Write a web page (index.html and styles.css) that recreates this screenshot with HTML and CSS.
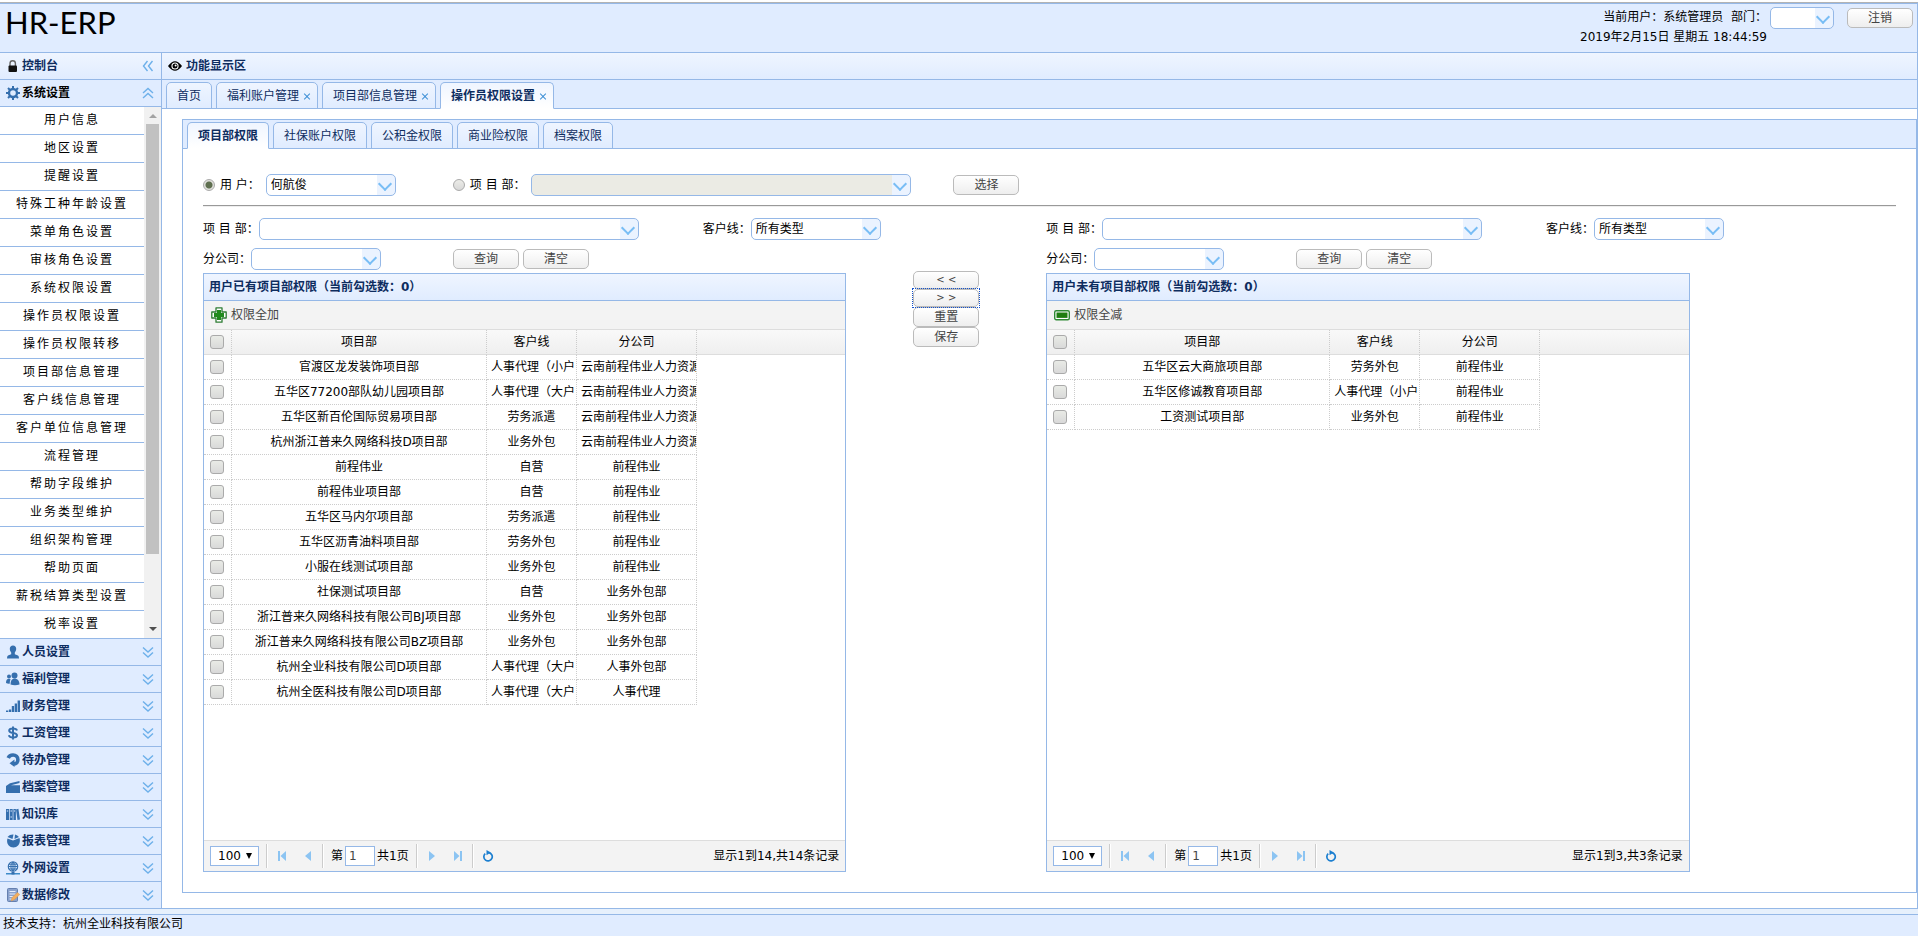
FILE: index.html
```html
<!DOCTYPE html>
<html lang="zh-CN">
<head>
    <meta charset="UTF-8">
    <meta name="viewport" content="width=device-width, initial-scale=1.0">
    <title>HR-ERP</title>
    <link rel="stylesheet" href="styles.css">
</head>
<body>
    <svg class="sprite" aria-hidden="true">
        <symbol id="i-lock" viewBox="0 0 14 14"><path d="M4 7V4.500a2.700 2.700 0 0 1 5.400 0V7" fill="none" stroke="#666" stroke-width="1.400"/><rect x="2.500" y="6.500" width="8.500" height="6.500" rx="1" fill="#111"/></symbol>
        <symbol id="i-eye" viewBox="0 0 14 14"><path d="M0 7q7-9.500 14 0-7 9.500-14 0z" fill="#000"/><circle cx="7" cy="7" r="3.600" fill="#fff"/><circle cx="7" cy="7" r="2.500" fill="#000"/><circle cx="7.600" cy="6.400" r="1" fill="#fff"/></symbol>
        <symbol id="i-gear" viewBox="0 0 14 14"><circle cx="7" cy="7" r="4" fill="none" stroke="#356fae" stroke-width="2.400"/><path d="M7 0v3M7 11v3M0 7h3M11 7h3M2 2l2 2M10 10l2 2M12 2l-2 2M4 10l-2 2" stroke="#356fae" stroke-width="2"/></symbol>
        <symbol id="i-user" viewBox="0 0 14 14"><path d="M7 .5c2 0 3.200 1.300 3.200 3.200 0 1.800-.8 2.800-1.400 3.800v1.700l3.200 1.300q1 .5 1 3H1q0-2.500 1-3l3.200-1.300V7.500C4.600 6.500 3.800 5.500 3.800 3.700 3.800 1.800 5 .5 7 .5z"/></symbol>
        <symbol id="i-users" viewBox="0 0 14 14"><circle cx="8.500" cy="3.500" r="3"/><path d="M4.500 12.500c0-4 1.500-6 4-6s5 2 5 6q-4.500 1.500-9 0z"/><circle cx="3" cy="4.500" r="2"/><path d="M0 11c0-3 1-4.200 3-4.200q1 0 1.600.5Q3.700 9 3.700 11.800 1.500 12 0 11z"/></symbol>
        <symbol id="i-bars" viewBox="0 0 14 14"><path d="M0 11.500h2.300V13H0zM2.900 10.500h2.300V13H2.900zM5.800 7h2.300v6H5.800zM8.700 4.500H11V13H8.700zM11.600 1.500H14V13h-2.400z"/></symbol>
        <symbol id="i-dollar" viewBox="0 0 14 14"><path d="M11 4.500C10.500 3 9 2.500 7 2.500c-2.500 0-3.800 1-3.800 2.300C3.200 8 11 6 11 9.300c0 1.400-1.600 2.300-4 2.300-2.200 0-3.700-.8-4.200-2.300M7 .5v13" fill="none" stroke="#356fae" stroke-width="2"/></symbol>
        <symbol id="i-turn" viewBox="0 0 14 14"><path d="M2.200 5C3 3 4.800 2 7 2c3 0 4.900 2 4.900 4.700 0 2.600-2 4.300-4.400 4.300" fill="none" stroke="#356fae" stroke-width="3.600"/><path d="M8.500 6.500V14L3.500 10.300z"/></symbol>
        <symbol id="i-folder" viewBox="0 0 14 14"><path d="M0 6l4-2.800L13.500 1v2L5 5.200h9V13H0z"/></symbol>
        <symbol id="i-books" viewBox="0 0 14 14"><path d="M0 2h3v11H0zM3.700 2h3v11h-3zM7.400 2h2.500v11H7.400zM10 2.500l2.400-.8L14 12.500l-2.500.5z"/><path d="M.8 4h1.400M4.500 4h1.400M8 4h1.200M4.500 10h1.400" stroke="#e0ecff"/></symbol>
        <symbol id="i-pie" viewBox="0 0 14 14"><path d="M7 6.500l6.500-2.500c1.500 5-1.500 9.500-6 9.500-5 0-7.500-4.500-6-9z"/><path d="M6.500 5L1.500 3C3 .8 6 .2 7.500.5zM8.500 5l.5-4.500q2.500.5 4 2.500z"/></symbol>
        <symbol id="i-globe" viewBox="0 0 14 14"><circle cx="7" cy="5.500" r="4.700" fill="#dcecff" stroke="#356fae" stroke-width="1.200"/><path d="M2.500 5.500h9M3 3.200h8M3 8h8M7 1v9.500M7 1Q2.500 5.500 7 10M7 1q4.500 4.500 0 9" fill="none" stroke="#356fae"/><path d="M0 12h14v1.500H0z" fill="#3d8bc9"/><path d="M5.500 11h3v2.500h-3z"/></symbol>
        <symbol id="i-note" viewBox="0 0 14 14"><rect x="1.500" y=".5" width="10" height="13" rx="1" fill="#8aa2cd" stroke="#6580b0"/><path d="M3.500 3.500h6M3.500 6h6M3.500 8.500h4M3.500 11h3" stroke="#e7eefb"/><path d="M5 13l1-3.500 5.500-5 2.300 2-5.600 5.300z" fill="#f3ae5f" stroke="#d59a58" stroke-width=".5"/></symbol>
        <symbol id="i-left2" viewBox="0 0 12 12"><path d="M5.500 1L1.500 6l4 5M10.500 1l-4 5 4 5" fill="none" stroke="#6db0ea" stroke-width="1.400"/></symbol>
        <symbol id="i-up2" viewBox="0 0 12 12"><path d="M1 6l5-4.500L11 6M1 11l5-4.500 5 4.500" fill="none" stroke="#6db0ea" stroke-width="1.400"/></symbol>
        <symbol id="i-down2" viewBox="0 0 12 12"><path d="M1 1.500L6 6l5-4.500M1 6.500L6 11l5-4.500" fill="none" stroke="#6db0ea" stroke-width="1.400"/></symbol>
        <symbol id="i-plus" viewBox="0 0 16 16"><path d="M5 .8h6L11 5h4.200v6H11v4.200H5V11H.8V5H5z" fill="#fff" stroke="#2f7d35" stroke-width="1.300" stroke-linejoin="round"/><path d="M6 3h4v3h3v4h-3v3H6v-3H3V6h3z" fill="#218a1e"/></symbol>
        <symbol id="i-minus" viewBox="0 0 16 16"><rect x=".7" y="3.700" width="14.600" height="9" rx="1.500" fill="#fff" stroke="#2f8a35" stroke-width="1.400"/><path d="M2.500 5.500h11v5.400h-11z" fill="#1e7d10"/></symbol>
        <symbol id="i-first" viewBox="0 0 12 12"><path d="M2 1h2v10H2zM10 1v10L4.500 6z"/></symbol>
        <symbol id="i-prev" viewBox="0 0 12 12"><path d="M9 1v10L3 6z"/></symbol>
        <symbol id="i-next" viewBox="0 0 12 12"><path d="M3 1v10l6-5z"/></symbol>
        <symbol id="i-last" viewBox="0 0 12 12"><path d="M8 1h2v10H8zM2 1v10l5.500-5z"/></symbol>
        <symbol id="i-refresh" viewBox="0 0 12 12"><path d="M3.200 3.600A4.200 4.200 0 1 0 7 2.600" fill="none" stroke="#1c7fd0" stroke-width="1.700"/><path d="M4.500 0v5.200L8.800 2.600z" fill="#1c7fd0"/></symbol>
    </svg>

    <header class="north">
        <h1>HR-ERP</h1>
        <div class="user-bar">
            <div class="user-info">
                <label for="dept">当前用户：系统管理员&nbsp; 部门：</label>
                <div>2019年2月15日 星期五 18:44:59</div>
            </div>
            <span class="combo combo-xs"><select id="dept"><option></option></select></span>
            <button class="btn logout">注销</button>
        </div>
    </header>

    <div class="middle">
        <nav class="west">
            <div class="panel-title"><svg class="icon"><use href="#i-lock"/></svg>控制台<svg class="tool"><use href="#i-left2"/></svg></div>
            <div class="acc-title selected"><svg class="icon"><use href="#i-gear"/></svg>系统设置<svg class="tool"><use href="#i-up2"/></svg></div>
            <div class="menu-wrap">
                <ul class="menu">
                    <li><a href="#">用户信息</a></li>
                    <li><a href="#">地区设置</a></li>
                    <li><a href="#">提醒设置</a></li>
                    <li><a href="#">特殊工种年龄设置</a></li>
                    <li><a href="#">菜单角色设置</a></li>
                    <li><a href="#">审核角色设置</a></li>
                    <li><a href="#">系统权限设置</a></li>
                    <li><a href="#">操作员权限设置</a></li>
                    <li><a href="#">操作员权限转移</a></li>
                    <li><a href="#">项目部信息管理</a></li>
                    <li><a href="#">客户线信息管理</a></li>
                    <li><a href="#">客户单位信息管理</a></li>
                    <li><a href="#">流程管理</a></li>
                    <li><a href="#">帮助字段维护</a></li>
                    <li><a href="#">业务类型维护</a></li>
                    <li><a href="#">组织架构管理</a></li>
                    <li><a href="#">帮助页面</a></li>
                    <li><a href="#">薪税结算类型设置</a></li>
                    <li><a href="#">税率设置</a></li>
                </ul>
                <div class="scrollbar"><i class="up"></i><i class="thumb"></i><i class="down"></i></div>
            </div>
            <div class="acc-title"><svg class="icon"><use href="#i-user"/></svg>人员设置<svg class="tool"><use href="#i-down2"/></svg></div>
            <div class="acc-title"><svg class="icon"><use href="#i-users"/></svg>福利管理<svg class="tool"><use href="#i-down2"/></svg></div>
            <div class="acc-title"><svg class="icon"><use href="#i-bars"/></svg>财务管理<svg class="tool"><use href="#i-down2"/></svg></div>
            <div class="acc-title"><svg class="icon"><use href="#i-dollar"/></svg>工资管理<svg class="tool"><use href="#i-down2"/></svg></div>
            <div class="acc-title"><svg class="icon"><use href="#i-turn"/></svg>待办管理<svg class="tool"><use href="#i-down2"/></svg></div>
            <div class="acc-title"><svg class="icon"><use href="#i-folder"/></svg>档案管理<svg class="tool"><use href="#i-down2"/></svg></div>
            <div class="acc-title"><svg class="icon"><use href="#i-books"/></svg>知识库<svg class="tool"><use href="#i-down2"/></svg></div>
            <div class="acc-title"><svg class="icon"><use href="#i-pie"/></svg>报表管理<svg class="tool"><use href="#i-down2"/></svg></div>
            <div class="acc-title"><svg class="icon"><use href="#i-globe"/></svg>外网设置<svg class="tool"><use href="#i-down2"/></svg></div>
            <div class="acc-title"><svg class="icon"><use href="#i-note"/></svg>数据修改<svg class="tool"><use href="#i-down2"/></svg></div>
        </nav>

        <main class="center">
            <div class="panel-title"><svg class="icon"><use href="#i-eye"/></svg>功能显示区</div>
            <ul class="tabs">
                <li><a href="#">首页</a></li>
                <li class="closable"><a href="#">福利账户管理</a><button class="close" aria-label="关闭"></button></li>
                <li class="closable"><a href="#">项目部信息管理</a><button class="close" aria-label="关闭"></button></li>
                <li class="closable selected"><a href="#">操作员权限设置</a><button class="close" aria-label="关闭"></button></li>
            </ul>
            <section class="work">
                <ul class="tabs">
                    <li class="selected"><a href="#">项目部权限</a></li>
                    <li><a href="#">社保账户权限</a></li>
                    <li><a href="#">公积金权限</a></li>
                    <li><a href="#">商业险权限</a></li>
                    <li><a href="#">档案权限</a></li>
                </ul>
                <div class="work-body">
                    <div class="row target">
                        <input type="radio" name="target" id="byUser" checked>
                        <label for="byUser">用 户：</label>
                        <span class="combo"><select aria-label="用户"><option>何航俊</option></select></span>
                        <input type="radio" name="target" id="byDept" class="second">
                        <label for="byDept">项 目 部：</label>
                        <span class="combo combo-lg"><select class="readonly" aria-label="项目部"><option></option></select></span>
                        <button class="btn choose">选择</button>
                    </div>
                    <hr>
                    <div class="filters">
                        <form class="filter">
                            <div class="row">
                                <label for="dept1">项 目 部：</label>
                                <span class="combo combo-lg"><select id="dept1"><option></option></select></span>
                                <label for="line1" class="line">客户线：</label>
                                <span class="combo"><select id="line1"><option>所有类型</option></select></span>
                            </div>
                            <div class="row">
                                <label for="branch1">分公司：</label>
                                <span class="combo"><select id="branch1"><option></option></select></span>
                                <button type="button" class="btn query">查询</button>
                                <button type="button" class="btn clear">清空</button>
                            </div>
                        </form>
                        <form class="filter">
                            <div class="row">
                                <label for="dept2">项 目 部：</label>
                                <span class="combo combo-lg"><select id="dept2"><option></option></select></span>
                                <label for="line2" class="line">客户线：</label>
                                <span class="combo"><select id="line2"><option>所有类型</option></select></span>
                            </div>
                            <div class="row">
                                <label for="branch2">分公司：</label>
                                <span class="combo"><select id="branch2"><option></option></select></span>
                                <button type="button" class="btn query">查询</button>
                                <button type="button" class="btn clear">清空</button>
                            </div>
                        </form>
                    </div>
                    <div class="transfer">
                        <div class="datagrid" id="owned"></div>
                        <div class="moves">
                            <button class="btn small">&lt; &lt;</button>
                            <button class="btn small focus">&gt; &gt;</button>
                            <button class="btn">重置</button>
                            <button class="btn">保存</button>
                        </div>
                        <div class="datagrid" id="missing"></div>
                    </div>
                </div>
            </section>
        </main>
    </div>

    <footer class="south">技术支持：杭州全业科技有限公司</footer>

    <script>
        const owned = [
            ['官渡区龙发装饰项目部', '人事代理（小户', '云南前程伟业人力资源'],
            ['五华区77200部队幼儿园项目部', '人事代理（大户', '云南前程伟业人力资源'],
            ['五华区新百伦国际贸易项目部', '劳务派遣', '云南前程伟业人力资源'],
            ['杭州浙江普来久网络科技D项目部', '业务外包', '云南前程伟业人力资源'],
            ['前程伟业', '自营', '前程伟业'],
            ['前程伟业项目部', '自营', '前程伟业'],
            ['五华区马内尔项目部', '劳务派遣', '前程伟业'],
            ['五华区沥青油料项目部', '劳务外包', '前程伟业'],
            ['小服在线测试项目部', '业务外包', '前程伟业'],
            ['社保测试项目部', '自营', '业务外包部'],
            ['浙江普来久网络科技有限公司BJ项目部', '业务外包', '业务外包部'],
            ['浙江普来久网络科技有限公司BZ项目部', '业务外包', '业务外包部'],
            ['杭州全业科技有限公司D项目部', '人事代理（大户', '人事外包部'],
            ['杭州全医科技有限公司D项目部', '人事代理（大户', '人事代理']
        ];
        const missing = [
            ['五华区云大商旅项目部', '劳务外包', '前程伟业'],
            ['五华区修诚教育项目部', '人事代理（小户', '前程伟业'],
            ['工资测试项目部', '业务外包', '前程伟业']
        ];

        function renderGrid(id, title, icon, action, rows) {
            const body = rows.map(row => `
                <tr>
                    <td><input type="checkbox" aria-label="${row[0]}"></td>
                    <td>${row[0]}</td><td>${row[1]}</td><td>${row[2]}</td>
                </tr>`).join('');
            document.getElementById(id).innerHTML = `
                <div class="panel-title">${title}（当前勾选数：0）</div>
                <div class="toolbar"><button><svg><use href="#${icon}"/></svg>${action}</button></div>
                <div class="grid-view">
                    <table>
                        <colgroup><col class="c-check"><col class="c-dept"><col class="c-line"><col class="c-branch"><col></colgroup>
                        <thead><tr>
                            <th><input type="checkbox" aria-label="全选"></th>
                            <th>项目部</th><th>客户线</th><th>分公司</th><th class="rest"></th>
                        </tr></thead>
                        <tbody>${body}</tbody>
                    </table>
                </div>
                <div class="pager">
                    <span class="page-size"><select aria-label="每页条数"><option>100</option></select></span>
                    <span class="sep"></span>
                    <button aria-label="首页"><svg><use href="#i-first"/></svg></button>
                    <button aria-label="上一页"><svg><use href="#i-prev"/></svg></button>
                    <span class="sep"></span>
                    <label class="page-num">第<input type="text" value="1">共1页</label>
                    <span class="sep"></span>
                    <button aria-label="下一页"><svg><use href="#i-next"/></svg></button>
                    <button aria-label="末页"><svg><use href="#i-last"/></svg></button>
                    <span class="sep"></span>
                    <button aria-label="刷新"><svg><use href="#i-refresh"/></svg></button>
                    <span class="page-info">显示1到${rows.length},共${rows.length}条记录</span>
                </div>`;
        }

        renderGrid('owned', '用户已有项目部权限', 'i-plus', '权限全加', owned);
        renderGrid('missing', '用户未有项目部权限', 'i-minus', '权限全减', missing);
    </script>
</body>
</html>
```
FILE: styles.css
```css
* {
    box-sizing: border-box;
}
body {
    display: flex;
    flex-direction: column;
    height: 100vh;
    margin: 0;
    padding-top: 2px;
    background: #fff;
    color: #000;
    font: 12px/18px "DejaVu Sans", "Noto Sans CJK SC", sans-serif;
}
ul {
    list-style: none;
    margin: 0;
    padding: 0;
}
a {
    color: inherit;
    text-decoration: none;
}
button, input, select {
    margin: 0;
    font: inherit;
    color: inherit;
}
svg {
    display: block;
}
.sprite {
    position: absolute;
    width: 0;
    height: 0;
}

/* page frame */
.north {
    display: flex;
    justify-content: space-between;
    height: 51px;
    border-top: 1px solid #b3b3b3;
    border-right: 1px solid #95b8e7;
    border-bottom: 1px solid #95b8e7;
    background: #e0ecff;
    box-shadow: inset 0 1px #95b8e7;
}
.north h1 {
    margin: 0;
    padding: 1px 0 0 5px;
    font: 31px/36px Lato, "Open Sans", sans-serif;
}
.user-bar {
    display: flex;
    align-items: flex-start;
    padding: 4px 4px 0 0;
}
.user-info {
    margin-right: 3px;
    text-align: right;
    line-height: 20px;
}
.logout {
    margin: 1px 0 0 13px;
}
.middle {
    display: flex;
    flex: 1;
    min-height: 0;
    border-bottom: 1px solid #95b8e7;
}
.south {
    height: 22px;
    margin-top: 5px;
    padding-left: 3px;
    border-top: 1px solid #95b8e7;
    background: #e0ecff;
    box-shadow: 0 -5px #e6f0fc;
}
.panel-title {
    display: flex;
    align-items: center;
    flex: none;
    height: 27px;
    padding: 0 7px 0 6px;
    border-bottom: 1px solid #95b8e7;
    background: linear-gradient(#eff5ff, #e0ecff);
    color: #0e2d5f;
    font-weight: bold;
}
.icon {
    width: 14px;
    height: 14px;
    margin-right: 2px;
    fill: #356fae;
}
.tool {
    width: 12px;
    height: 12px;
    margin-left: auto;
}

/* left menu */
.west {
    display: flex;
    flex-direction: column;
    flex: none;
    width: 162px;
    border-right: 1px solid #95b8e7;
}
.acc-title {
    display: flex;
    align-items: center;
    flex: none;
    height: 27px;
    padding: 0 7px 0 6px;
    border-top: 1px solid #95b8e7;
    background: #e0ecff;
    color: #0e2d5f;
    font-weight: bold;
}
.acc-title.selected {
    border-top: 0;
    border-bottom: 1px solid #95b8e7;
    color: #000;
}
.menu-wrap {
    display: flex;
    flex: 1;
    min-height: 0;
}
.menu {
    flex: 1;
    overflow: hidden;
}
.menu a {
    display: block;
    height: 28px;
    border-bottom: 1px solid #95b8e7;
    line-height: 26px;
    letter-spacing: 2px;
    text-align: center;
}
.menu li:last-child a {
    border-bottom: 0;
}
.scrollbar {
    display: flex;
    flex-direction: column;
    align-items: center;
    width: 17px;
    background: #f1f1f1;
}
.scrollbar .up, .scrollbar .down {
    margin: 7px 0 6px;
    border: 4px solid transparent;
    border-top-width: 0;
    border-bottom-color: #a3a3a3;
}
.scrollbar .down {
    margin: auto 0 7px;
    border-width: 4px 4px 0;
    border-top-color: #505050;
}
.scrollbar .thumb {
    width: 13px;
    height: 81%;
    background: #c1c1c1;
}

/* tabs */
.center {
    display: flex;
    flex-direction: column;
    flex: 1;
    min-width: 0;
    border-right: 1px solid #95b8e7;
}
.center > .panel-title .icon {
    margin-right: 4px;
}
.tabs {
    display: flex;
    flex: none;
    gap: 4px;
    height: 29px;
    padding: 2px 4px 0;
    border-bottom: 1px solid #95b8e7;
    background: #e0ecff;
}
.tabs li {
    display: flex;
    align-items: center;
    height: 27px;
    padding: 0 10px;
    border: 1px solid #95b8e7;
    border-radius: 5px 5px 0 0;
    background: linear-gradient(#eff5ff, #e0ecff);
    color: #0e2d5f;
}
.tabs .closable {
    padding-right: 6px;
}
.tabs .selected {
    border-bottom-color: #fff;
    background: linear-gradient(#eff5ff, #fff);
    font-weight: bold;
}
.close {
    position: relative;
    width: 8px;
    height: 8px;
    margin-left: 4px;
    padding: 0;
    border: 0;
    background: none;
}
.close::before, .close::after {
    content: "";
    position: absolute;
    top: 4px;
    left: 0;
    width: 8px;
    height: 1px;
    background: #3d8fd6;
    transform: rotate(45deg);
}
.close::after {
    transform: rotate(-45deg);
}

/* work area */
.work {
    display: flex;
    flex-direction: column;
    flex: 1;
    min-height: 0;
    margin: 10px 0 15px 20px;
    border: 1px solid #95b8e7;
}
.work-body {
    display: flex;
    flex-direction: column;
    flex: 1;
    min-height: 0;
    padding: 25px 20px 20px;
}
.row {
    display: flex;
    align-items: center;
    height: 22px;
    white-space: nowrap;
}
hr {
    width: 100%;
    margin: 9px 0 11px;
    border: 0;
    border-top: 1px solid #999;
    border-bottom: 1px solid #eee;
}
.target label {
    margin: 0 6px 0 5px;
}
.target .second {
    margin-left: 57px;
}
.choose {
    margin-left: 42px;
}
.filters {
    display: grid;
    grid-template-columns: calc(38% + 200px) 1fr;
}
.filter {
    display: grid;
    gap: 8px;
}
.filter .line {
    margin-left: 64px;
}
.query {
    margin-left: 72px;
}
.clear {
    margin-left: 4px;
}
.combo {
    position: relative;
    width: 130px;
    height: 22px;
}
.combo-xs {
    width: 64px;
}
.combo-lg {
    width: 380px;
}
.combo select {
    display: block;
    width: 100%;
    height: 22px;
    padding: 0 20px 0 4px;
    border: 1px solid #95b8e7;
    border-radius: 5px;
    background: linear-gradient(#ebf3ff, #ebf3ff) right / 18px 100% no-repeat #fff;
    line-height: 20px;
    appearance: none;
}
.combo .readonly {
    background-color: #ebebe4;
}
.combo::after {
    content: "";
    position: absolute;
    top: 5px;
    right: 6px;
    width: 8px;
    height: 8px;
    border: solid #78bdf5;
    border-width: 0 2px 2px 0;
    transform: rotate(45deg);
    pointer-events: none;
}
.btn {
    width: 66px;
    height: 20px;
    padding: 0;
    border: 1px solid #bbb;
    border-radius: 5px;
    background: linear-gradient(#fff, #eee);
    color: #444;
    line-height: 18px;
}
input[type="radio"] {
    width: 12px;
    height: 12px;
    border: 1px solid #aaa;
    border-radius: 50%;
    background: linear-gradient(#ecece8, #d8d8d8);
    appearance: none;
}
input[type="radio"]:checked {
    background: radial-gradient(#5f6f50 0 3px, #e0e0dc 4px);
}
input[type="checkbox"] {
    display: block;
    width: 14px;
    height: 14px;
    margin: 0 2px;
    border: 1px solid #aaa;
    border-radius: 3px;
    background: linear-gradient(#e9ebe6, #d9d9d9);
    appearance: none;
}

/* grids */
.transfer {
    display: flex;
    flex: 1;
    min-height: 0;
    margin-top: 3px;
}
.moves {
    display: flex;
    flex-direction: column;
    align-items: center;
    width: 200px;
    margin-top: -2px;
}
.btn.small {
    height: 18px;
    font-size: 10px;
    line-height: 14px;
}
.focus {
    position: relative;
}
.focus::after {
    content: "";
    position: absolute;
    inset: -2px;
    border: 1px dotted #1452cc;
}
.datagrid {
    display: flex;
    flex-direction: column;
    width: 38%;
    border: 1px solid #95b8e7;
}
.datagrid .panel-title {
    padding: 0 5px;
}
.toolbar {
    display: flex;
    align-items: center;
    height: 29px;
    padding-left: 7px;
    border-bottom: 1px solid #ddd;
    background: #f3f3f3;
}
.toolbar button {
    display: flex;
    align-items: center;
    gap: 4px;
    padding: 0;
    border: 0;
    background: none;
    color: #444;
}
.toolbar svg {
    width: 16px;
    height: 16px;
}
.grid-view {
    flex: 1;
    min-height: 0;
    overflow: hidden;
}
.grid-view table {
    width: 100%;
    border-spacing: 0;
    table-layout: fixed;
}
.c-check {
    width: 28px;
}
.c-dept {
    width: 255px;
}
.c-line {
    width: 90px;
}
.c-branch {
    width: 120px;
}
.grid-view th, .grid-view td {
    height: 25px;
    padding: 0 4px;
    border-right: 1px dotted #ccc;
    border-bottom: 1px dotted #ccc;
    overflow: hidden;
    font-weight: normal;
    text-align: center;
    white-space: nowrap;
}
.grid-view th {
    border-bottom: 1px solid #ddd;
    background: linear-gradient(#f9f9f9, #efefef);
}
.grid-view .rest {
    border-right: 0;
}
.pager {
    display: flex;
    align-items: center;
    height: 31px;
    padding: 0 6px;
    border-top: 1px solid #ddd;
    background: #f3f3f3;
}
.pager button {
    width: 26px;
    height: 26px;
    padding: 0 7px;
    border: 0;
    background: none;
    fill: #8cc4f2;
}
.pager svg {
    width: 12px;
    height: 12px;
}
.page-size {
    position: relative;
}
.page-size select {
    display: block;
    width: 49px;
    height: 20px;
    padding: 0 0 0 7px;
    border: 1px solid #95b8e7;
    border-radius: 0;
    background: #fff;
    appearance: none;
}
.page-size::after {
    content: "";
    position: absolute;
    top: 7px;
    right: 7px;
    border: 3px solid transparent;
    border-top: 6px solid #000;
    border-bottom: 0;
    pointer-events: none;
}
.sep {
    width: 2px;
    height: 24px;
    margin: 0 1px;
    border-left: 1px solid #ccc;
    border-right: 1px solid #fff;
}
.page-size + .sep {
    margin-left: 7px;
}
.page-num {
    display: flex;
    align-items: center;
    gap: 2px;
    padding: 0 6px;
}
.page-num input {
    width: 30px;
    height: 20px;
    padding: 0 3px;
    border: 1px solid #95b8e7;
    color: #444;
}
.page-info {
    margin-left: auto;
}
```
